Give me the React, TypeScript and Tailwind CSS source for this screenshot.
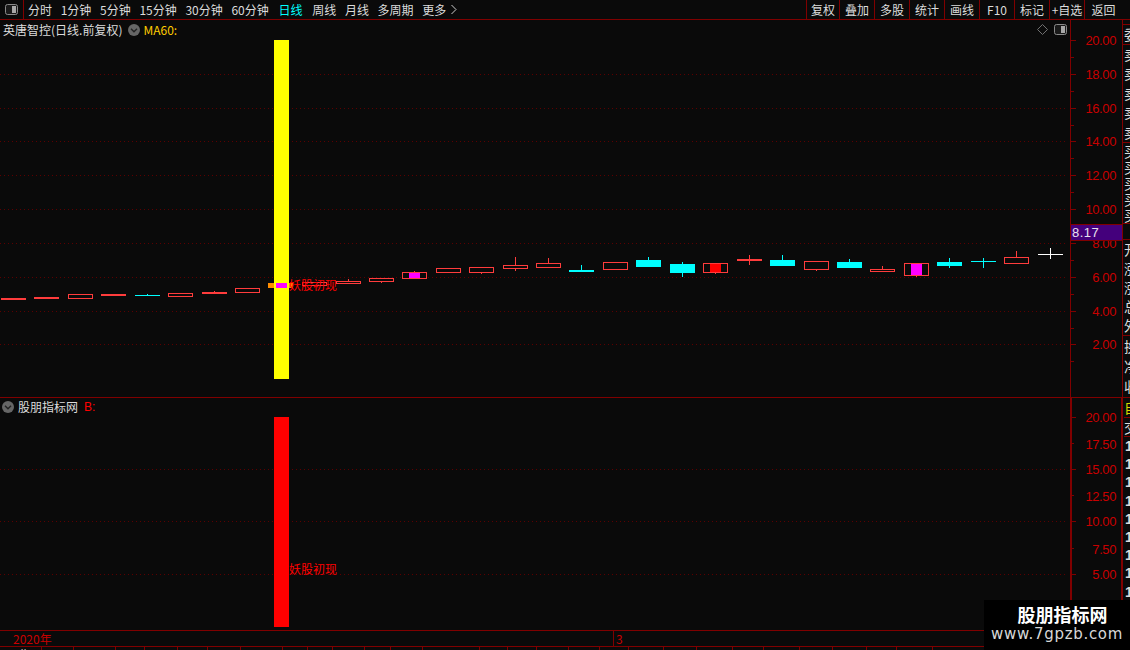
const leftTabs = ["分时", "1分钟", "5分钟", "15分钟", "30分钟", "60分钟", "日线", "周线", "月线", "多周期"];
const rightBtns = [
  { t: "复权", w: "w-[33px]" },
  { t: "叠加", w: "w-[35px]" },
  { t: "多股", w: "w-[35px]" },
  { t: "统计", w: "w-[35px]" },
  { t: "画线", w: "w-[35px]" },
  { t: "F10", w: "w-[35px]" },
  { t: "标记", w: "w-[35px]" },
  { t: "+自选", w: "w-[35px]" },
  { t: "返回", w: "w-[37px]" },
];

// x, top, bottom, wick top, wick bottom, type, inner fill
type Candle = [number, number, number, number, number, "fill" | "hollow" | "cyan" | "white", string?];
const candles: Candle[] = [
  [1, 298, 300, 298, 300, "fill"],
  [34, 297, 299, 297, 299, "fill"],
  [68, 294, 299, 294, 299, "hollow"],
  [101, 294, 296, 294, 296, "fill"],
  [135, 295, 296, 294, 296, "cyan"],
  [168, 293, 297, 293, 297, "hollow"],
  [202, 292, 294, 291, 294, "fill"],
  [235, 288, 293, 288, 293, "hollow"],
  [302, 282, 286, 282, 286, "hollow"],
  [336, 281, 284, 279, 284, "hollow"],
  [369, 278, 282, 278, 283, "hollow"],
  [402, 272, 279, 271, 279, "hollow", "#ff00ff"],
  [436, 268, 273, 268, 273, "hollow"],
  [469, 267, 273, 267, 274, "hollow"],
  [503, 265, 269, 257, 271, "hollow"],
  [536, 263, 268, 258, 268, "hollow"],
  [569, 270, 272, 265, 272, "cyan"],
  [603, 262, 270, 262, 270, "hollow"],
  [636, 260, 267, 257, 267, "cyan"],
  [670, 264, 273, 262, 277, "cyan"],
  [703, 263, 273, 263, 274, "hollow", "#ff0000"],
  [737, 259, 261, 255, 265, "fill"],
  [770, 260, 266, 255, 266, "cyan"],
  [804, 261, 270, 261, 271, "hollow"],
  [837, 262, 268, 259, 268, "cyan"],
  [870, 269, 272, 266, 272, "hollow"],
  [904, 263, 276, 263, 277, "hollow", "#ff00ff"],
  [937, 262, 266, 258, 268, "cyan"],
  [971, 261, 262, 258, 268, "cyan"],
  [1004, 257, 264, 251, 264, "hollow"],
  [1038, 254, 255, 248, 259, "white"],
];

const RED = "#ff3c3c";

function CandleMark({ c }: { c: Candle }) {
  const [x, top, bottom, wt, wb, type, inner] = c;
  const color = type === "cyan" ? "#00ffff" : type === "white" ? "#ffffff" : RED;
  return (
    <g>
      <rect x={x + 12} y={wt} width={1} height={wb - wt} fill={color} />
      {type === "hollow" ? (
        <rect x={x + 0.5} y={top + 0.5} width={24} height={bottom - top - 1} fill="#0a0a0a" stroke={color} strokeWidth={1} />
      ) : (
        <rect x={x} y={top} width={25} height={bottom - top} fill={color} />
      )}
      {inner && <rect x={x + 7} y={top + 1} width={11} height={bottom - top - 2} fill={inner} />}
    </g>
  );
}

function GridLine({ y }: { y: number }) {
  return <line x1={0} x2={1067} y1={y + 0.5} y2={y + 0.5} stroke="#5c0000" strokeWidth={1} strokeDasharray="1 3" />;
}

function ChevronCircle() {
  return (
    <svg width="12" height="12" viewBox="0 0 12 12" className="shrink-0">
      <circle cx="6" cy="6" r="6" fill="#666666" />
      <path d="M3 4.8 L6 7.8 L9 4.8" fill="none" stroke="#222222" strokeWidth="1.4" />
    </svg>
  );
}

function PanelIcon() {
  return (
    <svg width="13" height="11" viewBox="0 0 13 11" className="shrink-0">
      <rect x="0.5" y="0.5" width="12" height="10" rx="2" fill="#1a1a1a" stroke="#8a8a8a" />
      <rect x="7" y="2" width="4" height="7" fill="#a8a8a8" />
    </svg>
  );
}

function AxisSvg({
  viewY,
  height,
  width,
  ticks,
  labels,
  thick,
}: {
  viewY: number;
  height: number;
  width: number;
  ticks: [number, number][];
  labels: [string, number][];
  thick?: boolean;
}) {
  return (
    <svg width={width} height={height} viewBox={`1070 ${viewY} ${width} ${height}`} className="block shrink-0" shapeRendering="crispEdges">
      <rect x={1070} y={viewY} width={thick ? 2 : 1} height={height} fill="#800000" />
      {ticks.map(([y, len]) => (
        <rect key={y} x={1071} y={y} width={len} height={1} fill="#800000" />
      ))}
      {labels.map(([t, y]) => (
        <text
          key={t}
          x={1116}
          y={y + 5}
          textAnchor="end"
          fill="#c80000"
          fontSize="13"
          letterSpacing="-0.4"
          fontFamily="'Liberation Sans', sans-serif"
          shapeRendering="auto"
        >
          {t}
        </text>
      ))}
    </svg>
  );
}

const upperMajor = [40, 74, 108, 141, 175, 209, 243, 277, 311, 344];
const upperTicks: [number, number][] = [
  ...upperMajor.map((y): [number, number] => [y, 5]),
  ...upperMajor.map((y): [number, number] => [y + 17, 3]),
];
const upperLabels: [string, number][] = [
  ["20.00", 40],
  ["18.00", 74],
  ["16.00", 108],
  ["14.00", 141],
  ["12.00", 175],
  ["10.00", 209],
  ["8.00", 243],
  ["6.00", 277],
  ["4.00", 311],
  ["2.00", 344],
];
const lowerTicks: [number, number][] = [
  [417, 5],
  [443, 3],
  [469, 5],
  [495, 3],
  [521, 5],
  [548, 3],
  [574, 5],
];
const lowerLabels: [string, number][] = [
  ["20.00", 417],
  ["17.50", 444],
  ["15.00", 469],
  ["12.50", 496],
  ["10.00", 521],
  ["7.50", 549],
  ["5.00", 574],
];

const sells = ["卖", "卖", "卖", "卖", "卖"];
const buys = ["买", "买", "买", "买", "买"];
const bottomCells = [42, 32, 42, 29, 33, 30, 33, 42, 25, 25, 32, 26, 32, 57, 28, 29, 32, 31, 29, 35, 33, 36, 31, 36, 33, 34, 30, 36];

export default function App() {
  return (
    <div className="relative flex h-[650px] w-[1130px] flex-col overflow-hidden bg-[#0a0a0a] font-['Noto_Sans_CJK_SC','Liberation_Sans',sans-serif] text-[12px] text-[#dcdcdc]">
      {/* top toolbar */}
      <div className="flex h-[20px] shrink-0 items-center border-b border-[#800000] leading-[19px]">
        <div className="flex h-[19px] w-[24px] shrink-0 items-center justify-center border-r border-[#800000]">
          <PanelIcon />
        </div>
        <div className="flex items-center gap-[8.7px] pl-[4px]">
          {leftTabs.map((t) => (
            <span key={t} className={t === "日线" ? "mx-[1px] text-[#00ffff]" : ""}>
              {t}
            </span>
          ))}
          <span className="-ml-[2px] flex items-center pl-[2px]">
            更多
            <svg width="8" height="11" viewBox="0 0 8 11" className="ml-[4px]">
              <path d="M1.5 1 L6 5.5 L1.5 10" fill="none" stroke="#cccccc" />
            </svg>
          </span>
        </div>
        <div className="ml-auto mr-[8px] flex h-[19px] w-[316px] border-l border-[#800000]">
          {rightBtns.map((b) => (
            <div key={b.t} className={`${b.w} flex shrink-0 items-center justify-center whitespace-nowrap border-r border-[#800000] last:border-r-0`}>
              {b.t}
            </div>
          ))}
        </div>
      </div>

      {/* upper panel */}
      <div className="flex h-[378px] shrink-0 border-b border-[#800000]">
        <div className="relative h-[377px] w-[1070px] shrink-0 overflow-hidden">
          <svg width="1070" height="377" viewBox="0 20 1070 377" className="block" shapeRendering="crispEdges">
            {[74, 108, 141, 175, 209, 243, 277, 311, 344].map((y) => (
              <GridLine key={y} y={y} />
            ))}
            {candles.map((c) => (
              <CandleMark key={c[0]} c={c} />
            ))}
            <rect x={268} y={283} width={25} height={5} fill="#ff8c00" />
            <rect x={274} y={40} width={15} height={339} fill="#ffff00" />
            <rect x={276} y={283} width={11} height={5} fill="#ff00ff" />
            <text x={289} y={290} fill="#ff0000" fontSize="12" fontFamily="'Noto Sans CJK SC', sans-serif" shapeRendering="auto">
              妖股初现
            </text>
          </svg>
          <div className="absolute left-[3px] top-[2px] flex items-center leading-[16px]">
            <span className="whitespace-nowrap">英唐智控(日线.前复权)</span>
            <span className="ml-[6px]">
              <ChevronCircle />
            </span>
            <span className="ml-[3px] text-[12px] text-[#ffcc00]">MA60:</span>
          </div>
          <div className="absolute right-[3px] top-[4px] flex items-center gap-[6px]">
            <svg width="11" height="11" viewBox="0 0 11 11">
              <path d="M5.5 0.5 L10.5 5.5 L5.5 10.5 L0.5 5.5 Z" fill="none" stroke="#707070" />
            </svg>
            <PanelIcon />
          </div>
        </div>
        <div className="relative h-[377px] w-[52px] shrink-0">
          <AxisSvg viewY={20} height={377} width={52} ticks={upperTicks} labels={upperLabels} />
          <div className="absolute left-[1px] top-[204px] flex h-[17px] w-[51px] items-center border-y border-[#800000] bg-[#44007c] pl-[1px] font-['Liberation_Sans',sans-serif] text-[13px] tracking-[0.5px] text-[#e8e0f0]">
            8.17
          </div>
        </div>
        <div className="h-[377px] w-[8px] shrink-0 overflow-hidden border-l border-[#800000] text-[14px]">
          <div className="h-[5px] border-b border-[#800000]" />
          <div className="h-[20px] overflow-hidden whitespace-nowrap border-b border-[#800000] pl-[1px] leading-[19px]">委</div>
          <div className="h-[98px] border-b border-[#800000] leading-[19.4px]">
            {sells.map((t, i) => (
              <div key={i} className="h-[19.4px] overflow-hidden whitespace-nowrap pl-[1px]">
                {t}
              </div>
            ))}
          </div>
          <div className="h-[80px] leading-[16px]">
            {buys.map((t, i) => (
              <div key={i} className="h-[16px] overflow-hidden whitespace-nowrap pl-[1px]">
                {t}
              </div>
            ))}
          </div>
          <div className="h-[17px] border-y border-[#800000]" />
          <div className="h-[96px] border-b border-[#800000] leading-[19px]">
            {["开", "涨", "涨", "总", "外"].map((t, i) => (
              <div key={i} className="h-[19px] overflow-hidden whitespace-nowrap pl-[1px]">
                {t}
              </div>
            ))}
          </div>
          <div className="leading-[20px]">
            {["换", "净", "收"].map((t, i) => (
              <div key={i} className="h-[20px] overflow-hidden whitespace-nowrap pl-[1px]">
                {t}
              </div>
            ))}
          </div>
        </div>
      </div>

      {/* lower panel */}
      <div className="flex h-[232px] shrink-0">
        <div className="relative h-[232px] w-[1070px] shrink-0 overflow-hidden">
          <svg width="1070" height="232" viewBox="0 398 1070 232" className="block" shapeRendering="crispEdges">
            {[469, 521, 574].map((y) => (
              <GridLine key={y} y={y} />
            ))}
            <rect x={274} y={417} width={15} height={210} fill="#ff0000" />
            <text x={289} y={574} fill="#ff0000" fontSize="12" fontFamily="'Noto Sans CJK SC', sans-serif" shapeRendering="auto">
              妖股初现
            </text>
          </svg>
          <div className="absolute left-[2px] top-[1px] flex items-center leading-[16px]">
            <ChevronCircle />
            <span className="ml-[4px]">股朋指标网</span>
            <span className="ml-[6px] -mt-[1px] font-['Liberation_Sans',sans-serif] text-[12px] text-[#ff0000]">B:</span>
          </div>
        </div>
        <div className="h-[232px] w-[51px] shrink-0">
          <AxisSvg viewY={398} height={232} width={51} ticks={lowerTicks} labels={lowerLabels} thick />
        </div>
        <div className="h-[232px] w-[9px] shrink-0 overflow-hidden border-l-2 border-[#800000] pl-[1px] text-[14px] leading-[18px]">
          <div className="h-[20px] overflow-hidden whitespace-nowrap border-b border-[#800000] text-[#d8d800]">自</div>
          <div className="h-[19px] overflow-hidden whitespace-nowrap border-b border-[#800000]">交</div>
          {Array.from({ length: 10 }, (_, i) => (
            <div key={i} className="h-[18.2px] pl-[1px] font-['Liberation_Sans',sans-serif] font-bold">
              1
            </div>
          ))}
        </div>
      </div>

      {/* date bar */}
      <div className="flex h-[17px] shrink-0 border-y border-[#800000] text-[12px] leading-[15px] text-[#c80000]">
        <div className="w-[614px] shrink-0 border-r border-[#800000] pl-[13px]">2020年</div>
        <div className="pl-[2px]">3</div>
      </div>

      {/* clipped row under the date bar */}
      <div className="flex h-[3px] shrink-0 overflow-hidden leading-[16px]">
        {bottomCells.map((w, i) => (
          <div key={i} style={{ width: w }} className="h-[3px] shrink-0 overflow-hidden whitespace-nowrap border-r border-[#800000] pl-[8px]">
            {i === 0 ? "日期" : ""}
          </div>
        ))}
      </div>

      {/* site watermark */}
      <div className="absolute bottom-0 right-0 flex h-[50px] w-[146px] flex-col items-center bg-black pt-[2px]">
        <div className="pl-[11px] text-[18px] font-bold leading-[24px] text-white">股朋指标网</div>
        <div className="font-['DejaVu_Sans',sans-serif] text-[15px] leading-[17px] tracking-[0.7px] text-[#d8d8d8]">www.7gpzb.com</div>
      </div>
    </div>
  );
}
